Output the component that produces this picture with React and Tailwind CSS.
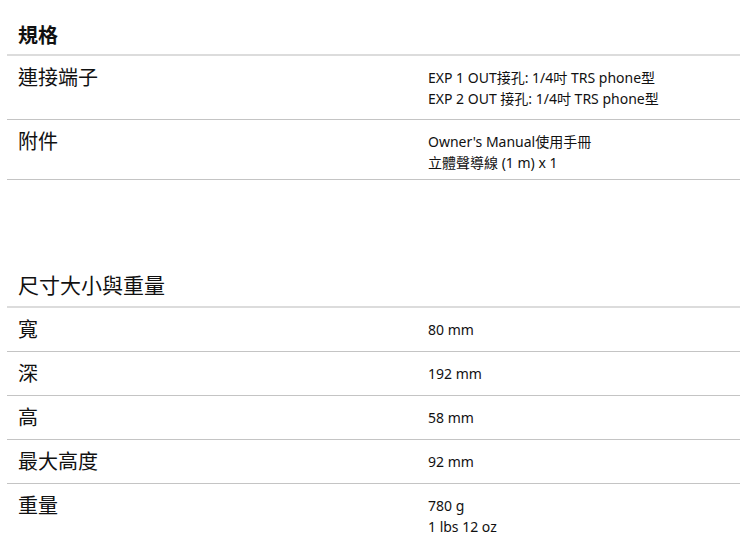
import React from 'react';

const specs = [
  { label: "連接端子", values: ["EXP 1 OUT接孔: 1/4吋 TRS phone型", "EXP 2 OUT 接孔: 1/4吋 TRS phone型"] },
  { label: "附件", values: ["Owner's Manual使用手冊", "立體聲導線 (1 m) x 1"], tight: true },
];

const dimensions = [
  { label: "寬", values: ["80 mm"] },
  { label: "深", values: ["192 mm"] },
  { label: "高", values: ["58 mm"] },
  { label: "最大高度", values: ["92 mm"] },
  { label: "重量", values: ["780 g", "1 lbs 12 oz"], last: true },
];

const cjk = { fontFamily: '"Noto Sans CJK TC", "Noto Sans", sans-serif' };
const latin = { fontFamily: '"Noto Sans", "Noto Sans CJK TC", sans-serif' };

function Row({ label, values, last, tight }) {
  return (
    <div className={`grid grid-cols-[421px_1fr] ${last ? "" : "border-b border-[#c4c4c4]"}`}>
      <div className="pl-[11px] pt-[7px] pb-[8px] text-[20px] leading-[28px] text-[#111]" style={cjk}>
        {label}
      </div>
      <div className={`pt-[11px] ${tight ? "pb-[6px]" : "pb-[10px]"} text-[14px] leading-[21px] text-[#111]`} style={latin}>
        {values.map((v, i) => (
          <div key={i}>{v}</div>
        ))}
      </div>
    </div>
  );
}

function Section({ title, rows, className, titleClass }) {
  return (
    <div className={className}>
      <h2 className={`pl-[11px] leading-[28px] text-[#111] border-b-2 border-[#dcdcdc] ${titleClass}`} style={cjk}>
        {title}
      </h2>
      {rows.map((r, i) => (
        <Row key={i} {...r} />
      ))}
    </div>
  );
}

export default function App() {
  return (
    <div className="w-[750px] h-[554px] overflow-hidden bg-white pl-[7px] pr-[10px] pt-[21px]">
      <Section title="規格" rows={specs} titleClass="text-[20px] font-bold pb-[5px]" />
      <Section title="尺寸大小與重量" rows={dimensions} className="mt-[90px]" titleClass="text-[21px] pb-[8px]" />
    </div>
  );
}
